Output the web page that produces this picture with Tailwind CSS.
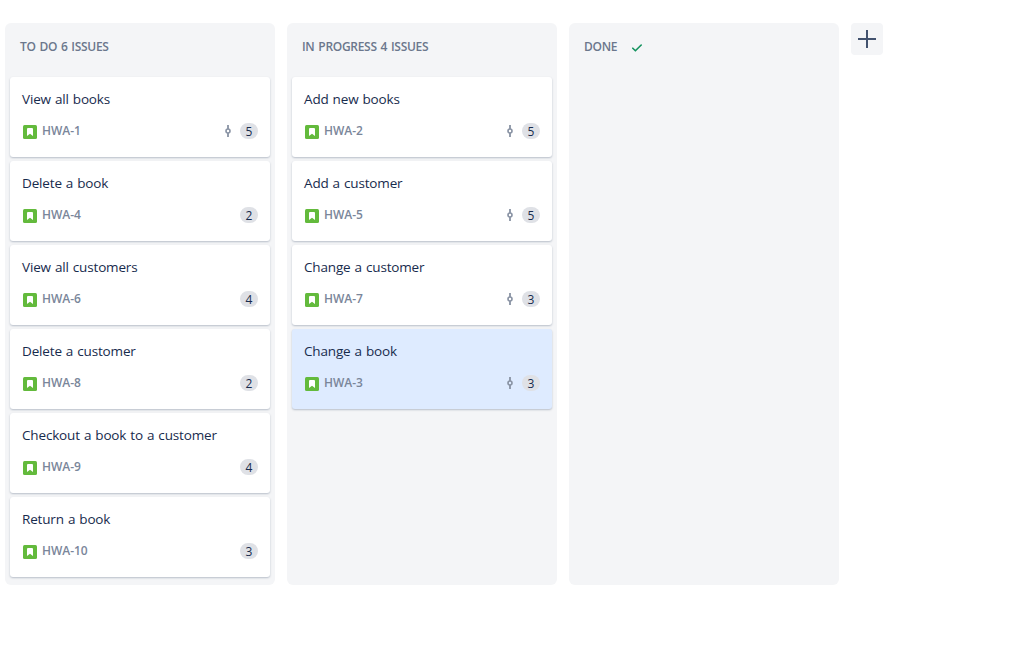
<!DOCTYPE html>
<html lang="en">
<head>
<meta charset="utf-8">
<title>Board</title>
<script src="https://cdn.jsdelivr.net/npm/@tailwindcss/browser@4"></script>
</head>
<body class="bg-white font-['Open_Sans','Noto_Sans',sans-serif] text-[#172b4d]">
<main id="board" class="flex h-[649px] items-start gap-3 overflow-hidden pt-[23px] pl-[5px]"></main>
<script>
const columns = [
  { title: 'TO DO 6 ISSUES', cards: [
    ['View all books', 'HWA-1', 5, true], ['Delete a book', 'HWA-4', 2], ['View all customers', 'HWA-6', 4],
    ['Delete a customer', 'HWA-8', 2], ['Checkout a book to a customer', 'HWA-9', 4], ['Return a book', 'HWA-10', 3]] },
  { title: 'IN PROGRESS 4 ISSUES', cards: [
    ['Add new books', 'HWA-2', 5, true], ['Add a customer', 'HWA-5', 5, true],
    ['Change a customer', 'HWA-7', 3, true], ['Change a book', 'HWA-3', 3, true, true]] },
  { title: 'DONE', done: true, cards: [] },
];
const story = `<svg class="mt-px size-3.5" viewBox="0 0 14 14"><rect width="14" height="14" rx="1.5" fill="#63ba3c"/><path d="M4 4a1 1 0 0 1 1-1h4a1 1 0 0 1 1 1v7L7 8.8 4 11z" fill="#fff"/></svg>`;
const commit = `<svg class="mr-[9px] h-3 w-1.5" viewBox="0 0 6 12" fill="none" stroke="#8993a4"><path d="M3 0v4M3 8v4" stroke-width="1.8"/><circle cx="3" cy="6" r="2" stroke-width="1.6"/></svg>`;
const check = `<svg class="ml-[15px] mt-0.5 h-2 w-2.5" viewBox="0 0 10 8" fill="none" stroke="#14935f" stroke-width="1.6" stroke-linecap="round" stroke-linejoin="round"><path d="M.8 4.2 3.4 6.8 9.2 1"/></svg>`;
const card = ([name, key, points, linked, selected]) => `
  <article class="flex h-20 flex-col rounded-[3px] px-3 pt-3 shadow-[0_1px_2px_rgba(9,30,66,0.25)] ${selected ? 'bg-[#deebff]' : 'bg-white'}">
    <h3 class="text-[13.5px] leading-5 tracking-[-0.16px] [word-spacing:0.7px] whitespace-nowrap">${name}</h3>
    <div class="mt-3 flex h-5 items-center pl-px">
      ${story}
      <span class="ml-[5px] text-[12px] leading-5 font-semibold tracking-[-0.05px] text-[#7a869a]">${key}</span>
      <div class="ml-auto flex items-center">
        ${linked ? commit : ''}
        <span class="flex h-4 w-[18px] items-center justify-center rounded-full bg-[#dfe1e6] pt-px text-[12px] leading-4">${points}</span>
      </div>
    </div>
  </article>`;
document.getElementById('board').innerHTML = columns.map(c => `
  <section class="h-[562px] w-[270px] shrink-0 rounded-md bg-[#f4f5f7] px-[5px]">
    <header class="flex h-[54px] items-center pb-[7px] pl-2.5">
      <h2 class="text-[12px] leading-4 font-semibold tracking-[-0.29px] [word-spacing:1px] whitespace-nowrap text-[#6b778c]">${c.title}</h2>
      ${c.done ? check : ''}
    </header>
    <div class="flex flex-col gap-1">${c.cards.map(card).join('')}</div>
  </section>`).join('') + `
  <button class="grid size-8 place-items-center rounded-[4px] bg-[#f4f5f7]" aria-label="Add column">
    <svg class="size-[18px]" viewBox="0 0 18 18" stroke="#42526e" stroke-width="2" stroke-linecap="butt"><path d="M9 0v18M0 9h18"/></svg>
  </button>`;
</script>
</body>
</html>
